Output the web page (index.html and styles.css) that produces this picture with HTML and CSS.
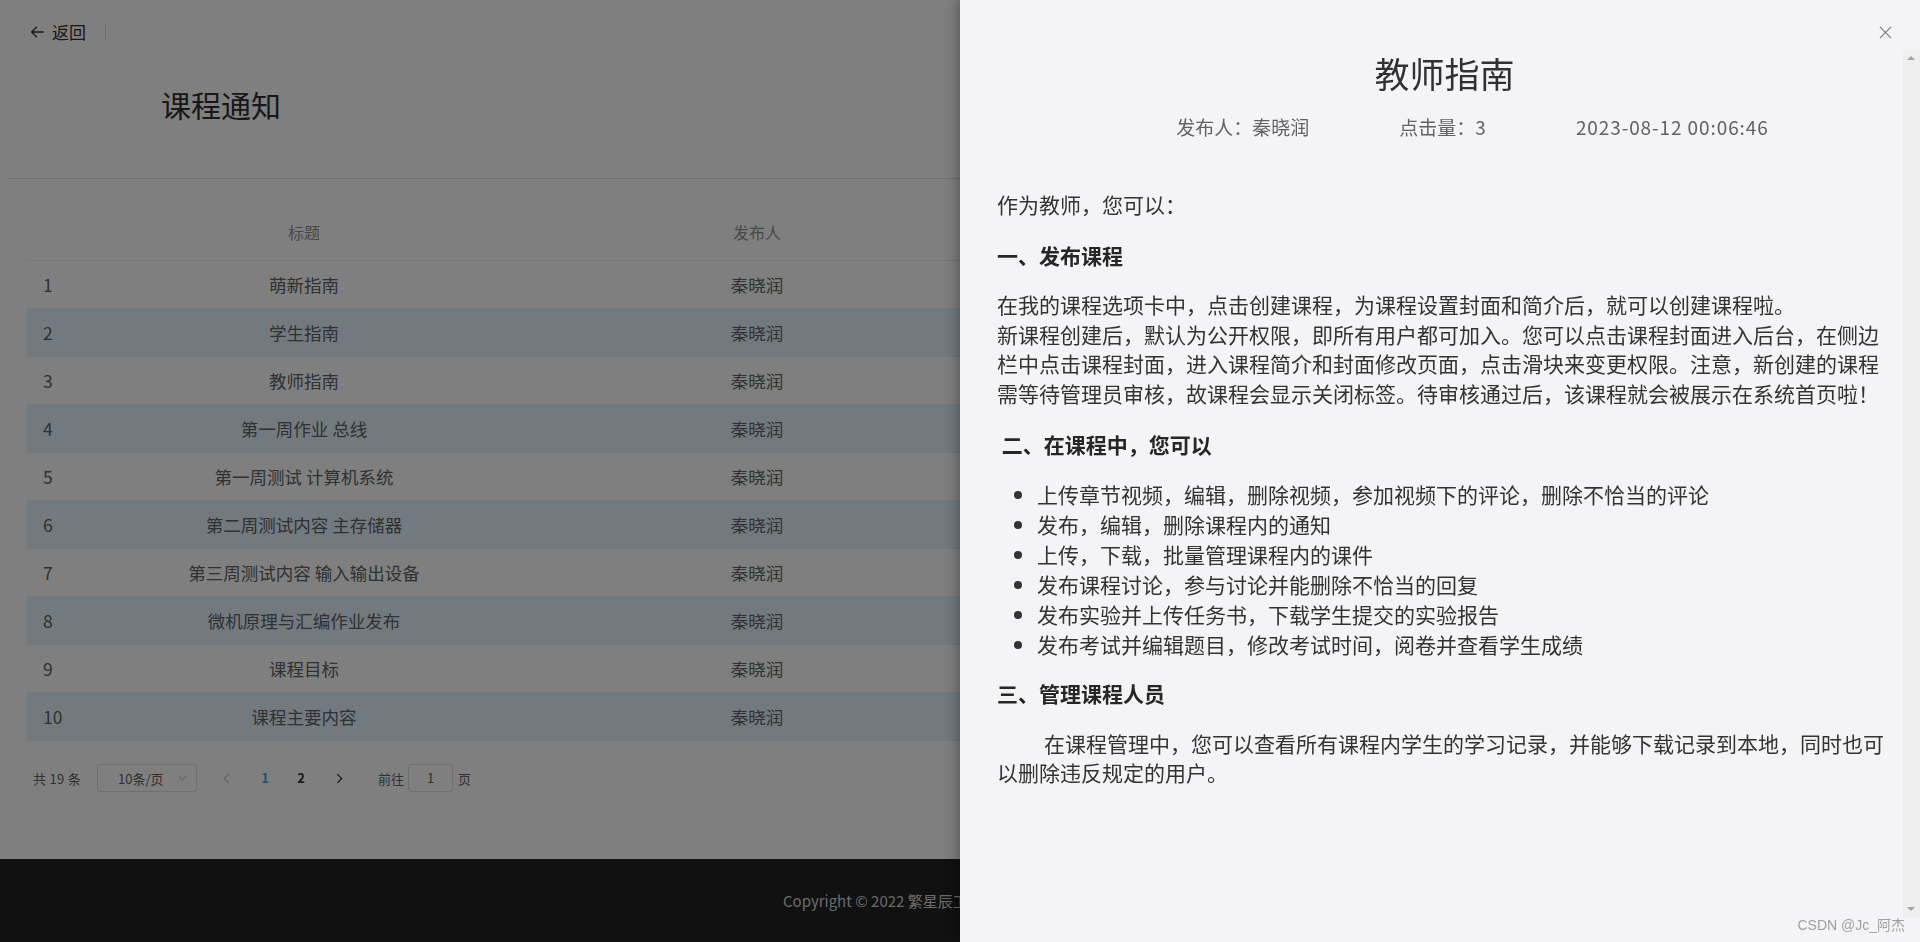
FILE: index.html
```html
<!DOCTYPE html>
<html lang="zh-CN">
<head>
<meta charset="utf-8">
<title>课程通知</title>
<link rel="stylesheet" href="styles.css">
</head>
<body>
<div class="page">
  <main class="main">
    <div class="page-header">
      <span class="back">
        <svg class="back-icon" viewBox="0 0 14 12" width="14" height="12"><path d="M13.2 6H1.6M6.4 1.2L1.6 6l4.8 4.8" fill="none" stroke="#303133" stroke-width="1.3" stroke-linecap="round" stroke-linejoin="round"/></svg>
        <span class="back-text">返回</span>
      </span>
      <span class="divider"></span>
    </div>
    <h1 class="page-title">课程通知</h1>
    <hr class="rule">
    <table class="notice-table">
      <colgroup>
        <col class="c-idx"><col class="c-title"><col class="c-pub"><col class="c-time"><col class="c-op">
      </colgroup>
      <thead>
        <tr><th></th><th>标题</th><th>发布人</th><th>发布时间</th><th>操作</th></tr>
      </thead>
      <tbody>
        <tr><td class="idx">1</td><td>萌新指南</td><td>秦晓润</td><td>2023-08-12 00:05:12</td><td>查看</td></tr>
        <tr class="alt"><td class="idx">2</td><td>学生指南</td><td>秦晓润</td><td>2023-08-12 00:05:58</td><td>查看</td></tr>
        <tr><td class="idx">3</td><td>教师指南</td><td>秦晓润</td><td>2023-08-12 00:06:46</td><td>查看</td></tr>
        <tr class="alt"><td class="idx">4</td><td>第一周作业 总线</td><td>秦晓润</td><td>2023-08-12 00:08:03</td><td>查看</td></tr>
        <tr><td class="idx">5</td><td>第一周测试 计算机系统</td><td>秦晓润</td><td>2023-08-12 00:09:21</td><td>查看</td></tr>
        <tr class="alt"><td class="idx">6</td><td>第二周测试内容 主存储器</td><td>秦晓润</td><td>2023-08-12 00:10:40</td><td>查看</td></tr>
        <tr><td class="idx">7</td><td>第三周测试内容 输入输出设备</td><td>秦晓润</td><td>2023-08-12 00:11:37</td><td>查看</td></tr>
        <tr class="alt"><td class="idx">8</td><td>微机原理与汇编作业发布</td><td>秦晓润</td><td>2023-08-12 00:12:15</td><td>查看</td></tr>
        <tr><td class="idx">9</td><td>课程目标</td><td>秦晓润</td><td>2023-08-12 00:13:02</td><td>查看</td></tr>
        <tr class="alt"><td class="idx">10</td><td>课程主要内容</td><td>秦晓润</td><td>2023-08-12 00:13:48</td><td>查看</td></tr>
      </tbody>
    </table>
    <div class="pagination">
      <span class="total">共 19 条</span>
      <span class="sizes">
        <span class="sizes-text">10条/页</span>
        <svg class="sizes-arrow" viewBox="0 0 10 6" width="9" height="6"><path d="M1 1l4 4 4-4" fill="none" stroke="#c0c4cc" stroke-width="1.2"/></svg>
      </span>
      <span class="btn-prev"><svg viewBox="0 0 8 12" width="7" height="11"><path d="M6.5 1L1.5 6l5 5" fill="none" stroke="#c0c4cc" stroke-width="1.4"/></svg></span>
      <span class="pager-num active">1</span>
      <span class="pager-num">2</span>
      <span class="btn-next"><svg viewBox="0 0 8 12" width="7" height="11"><path d="M1.5 1l5 5-5 5" fill="none" stroke="#303133" stroke-width="1.4"/></svg></span>
      <span class="jumper">前往<span class="jump-input">1</span>页</span>
    </div>
  </main>
  <footer class="footer">Copyright © 2022 繁星辰工作室 版权所有</footer>
</div>

<div class="mask"></div>

<aside class="drawer">
  <div class="drawer-header">
    <span class="close">
      <svg viewBox="0 0 14 14" width="13" height="13"><path d="M1 1l12 12M13 1L1 13" fill="none" stroke="#72767b" stroke-width="1.2"/></svg>
    </span>
  </div>
  <div class="drawer-body">
    <div class="scroll-content">
      <h2 class="notice-title">教师指南</h2>
      <div class="meta">
        <span>发布人：秦晓润</span>
        <span>点击量：3</span>
        <span class="date">2023-08-12 00:06:46</span>
      </div>
      <div class="article">
        <p class="intro">作为教师，您可以：</p>
        <h3 class="sec">一、发布课程</h3>
        <p>在我的课程选项卡中，点击创建课程，为课程设置封面和简介后，就可以创建课程啦。<br>新课程创建后，默认为公开权限，即所有用户都可加入。您可以点击课程封面进入后台，在侧边栏中点击课程封面，进入课程简介和封面修改页面，点击滑块来变更权限。注意，新创建的课程需等待管理员审核，故课程会显示关闭标签。待审核通过后，该课程就会被展示在系统首页啦！</p>
        <h3 class="sec sec-list">&nbsp;二、在课程中，您可以</h3>
        <ul class="list">
          <li>上传章节视频，编辑，删除视频，参加视频下的评论，删除不恰当的评论</li>
          <li>发布，编辑，删除课程内的通知</li>
          <li>上传，下载，批量管理课程内的课件</li>
          <li>发布课程讨论，参与讨论并能删除不恰当的回复</li>
          <li>发布实验并上传任务书，下载学生提交的实验报告</li>
          <li>发布考试并编辑题目，修改考试时间，阅卷并查看学生成绩</li>
        </ul>
        <h3 class="sec sec-last">三、管理课程人员</h3>
        <p class="indent">在课程管理中，您可以查看所有课程内学生的学习记录，并能够下载记录到本地，同时也可以删除违反规定的用户。</p>
      </div>
    </div>
    <div class="scrollbar">
      <span class="arrow up"></span>
      <span class="arrow down"></span>
    </div>
  </div>
  <div class="watermark">CSDN @Jc_阿杰</div>
</aside>
</body>
</html>
```

FILE: styles.css
```css
* { box-sizing: border-box; }
html, body { margin: 0; padding: 0; }
body {
  width: 1920px;
  height: 942px;
  overflow: hidden;
  background: #ffffff;
  color: #303133;
  font-family: "Noto Sans CJK SC", "Noto Sans", "Liberation Sans", sans-serif;
}

.page { display: flex; flex-direction: column; height: 942px; }
.main { flex: 1; }

/* page header */
.page-header {
  display: flex;
  align-items: center;
  height: 44px;
  padding: 20px 0 0 30px;
}
.back { display: flex; align-items: center; gap: 8px; font-size: 17px; line-height: 24px; color: #303133; }
.back-icon { display: block; }
.divider { width: 1px; height: 16px; background: #dcdfe6; margin-left: 19px; }

.page-title {
  margin: 40px 0 0 161px;
  font-size: 30px;
  line-height: 40px;
  font-weight: normal;
  color: #303133;
}
.rule { margin: 54px 8px 0; height: 0; border: 0; border-top: 1px solid #dcdfe6; }

/* table */
.notice-table {
  margin: 34px 27px 0;
  width: 1866px;
  border-collapse: collapse;
  table-layout: fixed;
  font-size: 17.5px;
  color: #606266;
}
.c-idx { width: 80px; }
.c-title { width: 394px; }
.c-pub { width: 512px; }
.c-time { width: 440px; }
.c-op { width: 440px; }
.notice-table th {
  padding: 8px 0 16px;
  line-height: 23px;
  font-size: 16px;
  font-weight: normal;
  color: #909399;
  border-bottom: 1px solid #ebeef5;
}
.notice-table td {
  padding: 12px 0;
  line-height: 23px;
  text-align: center;
  border-bottom: 1px solid #ebeef5;
  white-space: nowrap;
}
.notice-table td.idx { text-align: left; padding-left: 16px; }
.notice-table tr.alt td { background: #e6f4ff; }

/* pagination */
.pagination {
  display: flex;
  align-items: center;
  height: 28px;
  margin-top: 23px;
  padding-left: 33px;
  font-size: 13px;
  color: #606266;
}
.total { margin-right: 16px; letter-spacing: 0.3px; }
.sizes {
  display: flex;
  align-items: center;
  justify-content: space-between;
  width: 100px;
  height: 28px;
  padding: 0 9px 0 20px;
  border: 1px solid #dcdfe6;
  border-radius: 3px;
}
.sizes-arrow { display: block; }
.btn-prev, .btn-next {
  display: flex;
  align-items: center;
  justify-content: center;
  width: 30px;
  height: 28px;
}
.btn-prev { margin-left: 14px; }
.btn-next { margin-left: 5px; }
.pager-num {
  width: 36px;
  height: 28px;
  line-height: 28px;
  text-align: center;
  font-weight: bold;
  color: #303133;
}
.pager-num.active { margin-left: 6px; color: #409eff; }
.jumper { display: flex; align-items: center; margin-left: 24px; }
.jump-input {
  width: 45px;
  height: 28px;
  line-height: 26px;
  margin: 0 5px 0 4px;
  text-align: center;
  border: 1px solid #dcdfe6;
  border-radius: 3px;
  color: #606266;
}

/* footer */
.footer {
  height: 83px;
  line-height: 83px;
  padding-left: 783px;
  background: #222222;
  color: #d4d4d4;
  font-size: 15px;
  white-space: nowrap;
}

/* overlay + drawer */
.mask {
  position: fixed;
  inset: 0;
  background: rgba(0, 0, 0, 0.5);
}
.drawer {
  position: fixed;
  top: 0;
  right: 0;
  width: 960px;
  height: 942px;
  display: flex;
  flex-direction: column;
  background: #f4f4f6;
  box-shadow: -4px 0 12px rgba(0, 0, 0, 0.28);
}
.drawer-header {
  display: flex;
  justify-content: flex-end;
  height: 50px;
  padding: 20px 23px 0 0;
}
.close {
  display: flex;
  align-items: center;
  justify-content: center;
  width: 24px;
  height: 24px;
}
.drawer-body {
  display: flex;
  height: 867px;
}
.scroll-content { flex: 1; }
.scrollbar {
  width: 17px;
  display: flex;
  flex-direction: column;
  justify-content: space-between;
  align-items: center;
  background: #efeff0;
}
.arrow {
  width: 17px;
  height: 17px;
  position: relative;
}
.arrow::after {
  content: "";
  position: absolute;
  left: 4px;
  width: 0;
  height: 0;
  border-left: 4px solid transparent;
  border-right: 4px solid transparent;
}
.arrow.up::after { top: 6px; border-bottom: 4px solid #a3a3a3; }
.arrow.down::after { top: 7px; border-top: 4px solid #a3a3a3; }

.notice-title {
  margin: 0;
  padding: 0 18px 0 44px;
  font-size: 35px;
  line-height: 46px;
  font-weight: normal;
  text-align: center;
  color: #303133;
}
.meta {
  display: flex;
  justify-content: center;
  margin-top: 17px;
  padding-right: 8px;
  font-size: 19px;
  line-height: 28.5px;
  color: #606266;
  white-space: nowrap;
}
.meta span { margin-left: 90px; }
.meta .date { letter-spacing: 0.9px; }

.article {
  padding: 48px 18px 0 37px;
  font-size: 21px;
  line-height: 29.4px;
  color: #333333;
}
.article p { margin: 0; }
.article .sec {
  margin: 22px 0 20px;
  font-size: 21px;
  line-height: 29.4px;
  font-weight: bold;
  color: #262626;
}
.article .sec-list { margin-bottom: 21px; }
.article .sec-last { margin-top: 19.5px; }
.list { margin: 0; padding-left: 40px; }
.list li { line-height: 29.9px; }
.indent { text-indent: 47px; }

.watermark {
  position: absolute;
  right: 15px;
  bottom: 9px;
  font-family: "Liberation Sans", "Noto Sans CJK SC", sans-serif;
  font-size: 14px;
  line-height: 16px;
  color: #a0a0a0;
}
```
